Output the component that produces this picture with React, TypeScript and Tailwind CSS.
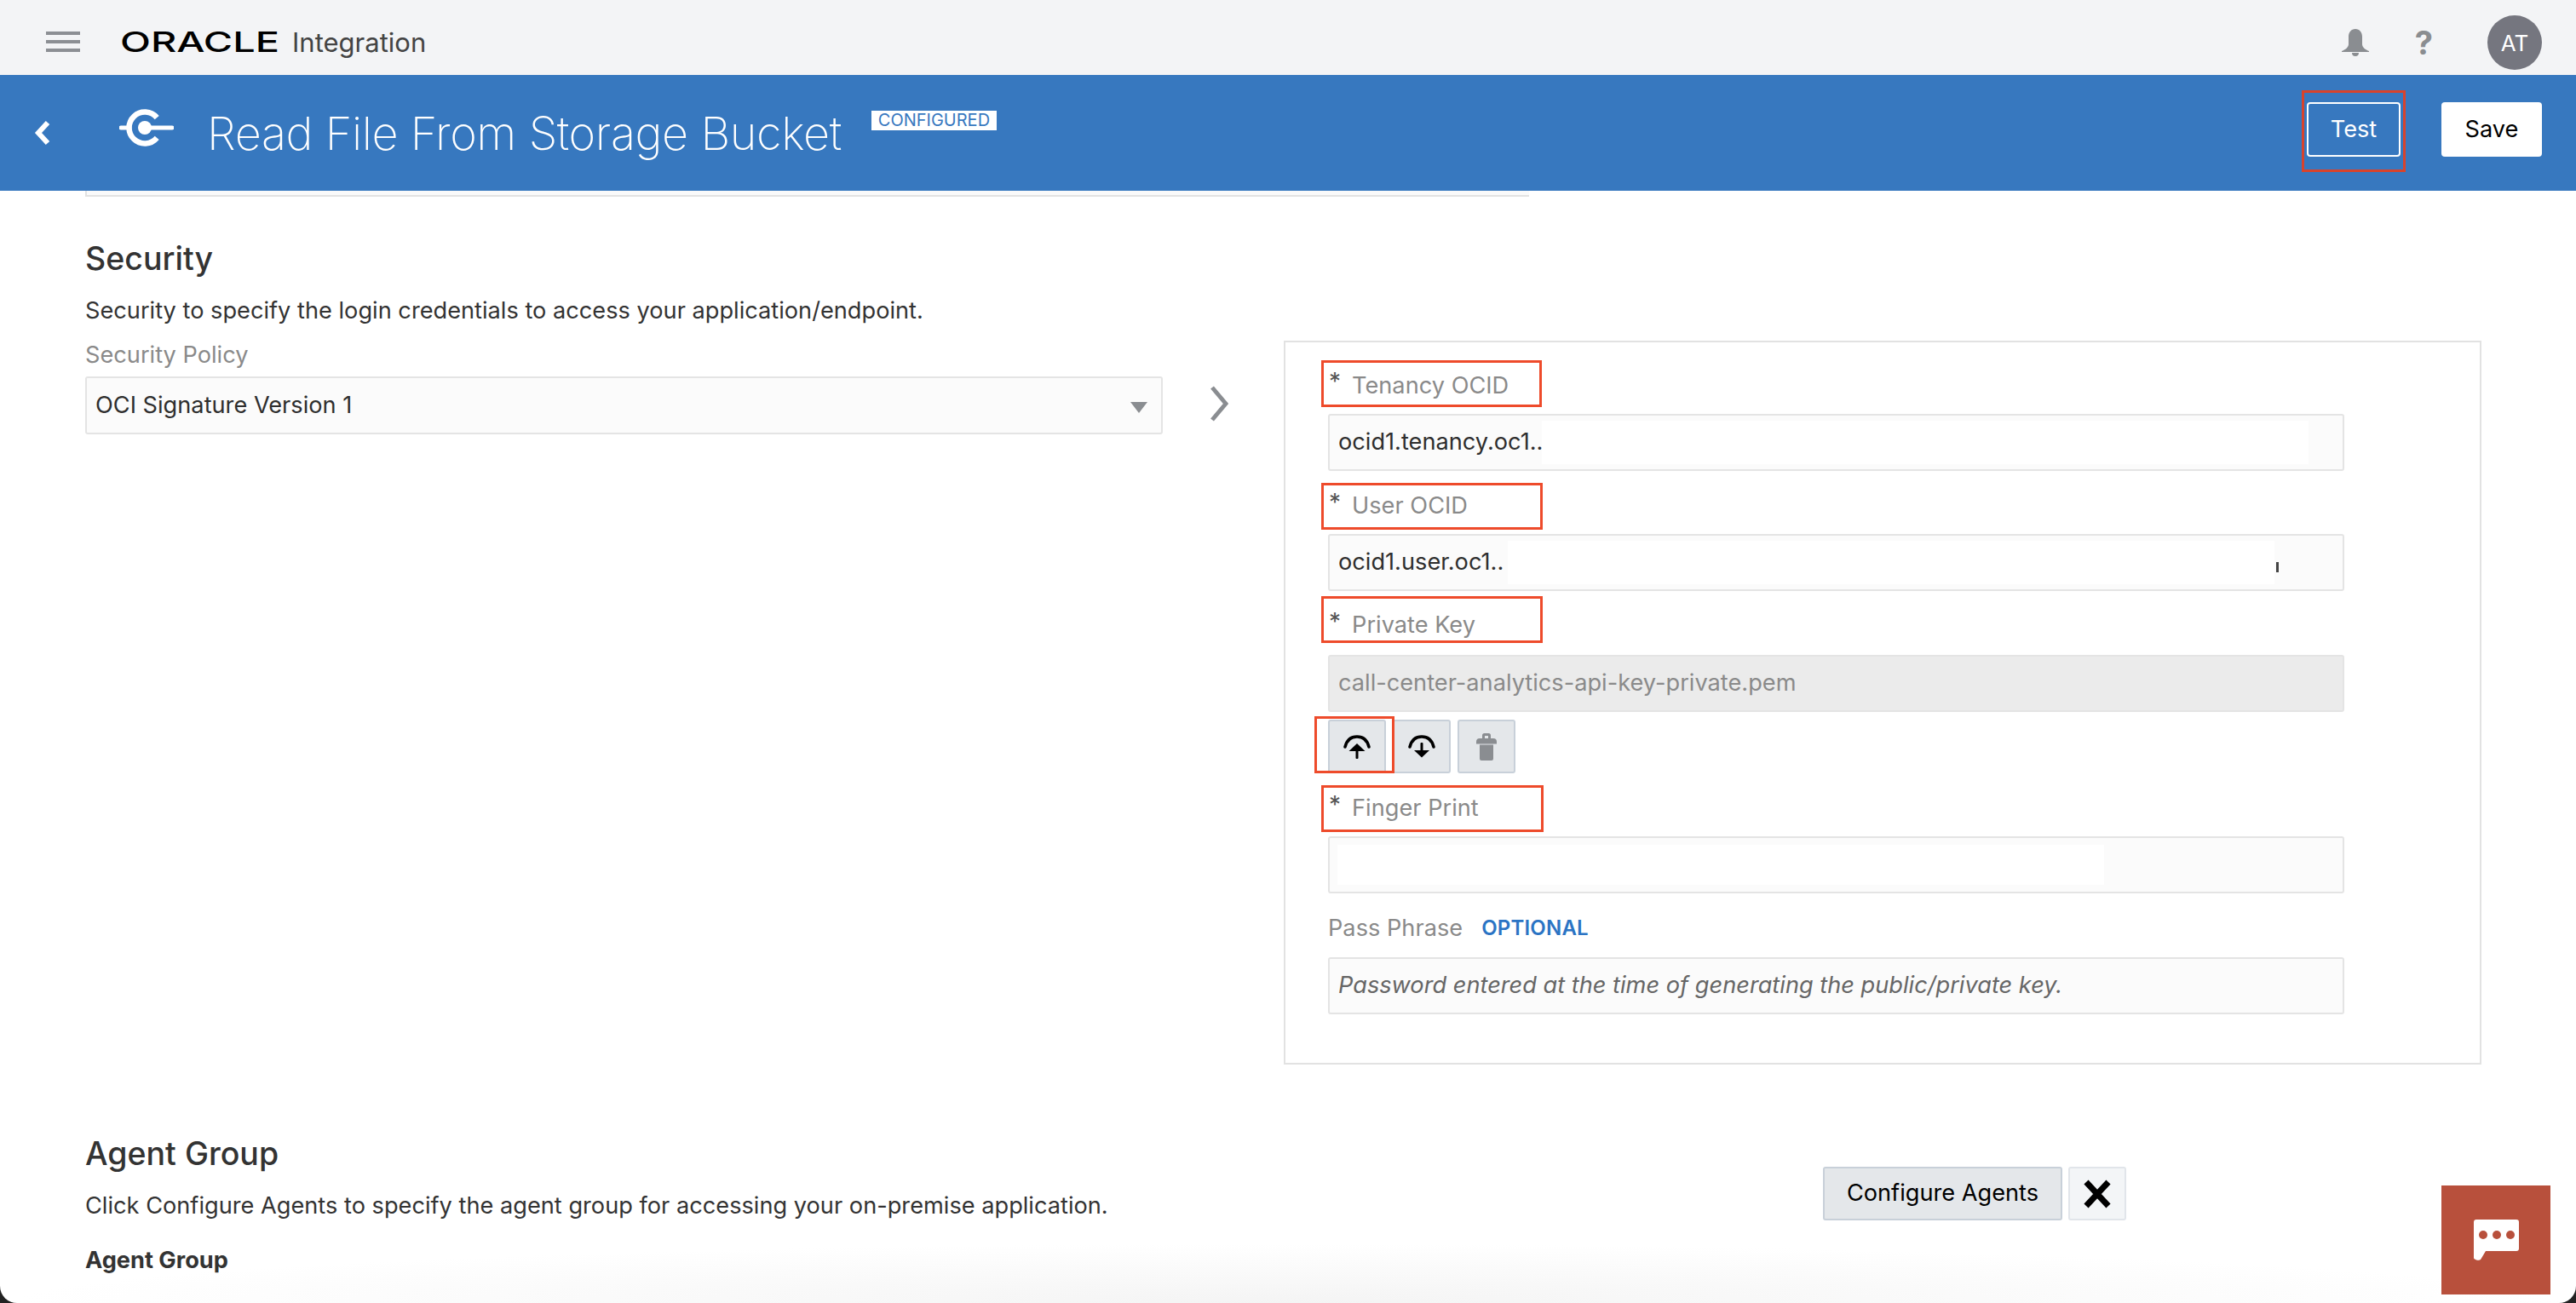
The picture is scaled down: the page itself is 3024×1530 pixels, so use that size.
const font = { fontFamily: "Inter, 'Liberation Sans', sans-serif" };

function FieldLabel({ text, className }: { text: string; className: string }) {
  return (
    <div className={`flex h-[55px] -ml-[8px] items-center border-[3px] border-[#ee4b2b] pl-[6px] ${className}`}>
      <span className="mr-[13px] mb-[10px] text-[28px] leading-none text-[#555]">*</span>
      <span className="text-[27.2px] text-[#8a8a8a]">{text}</span>
    </div>
  );
}

function TextBox({
  value,
  className = "",
  children,
}: {
  value?: string;
  className?: string;
  children?: React.ReactNode;
}) {
  return (
    <div
      className={`relative flex h-[67px] items-center rounded-[3px] border-2 border-[#e4e4e4] bg-[#fbfbfb] pl-[10px] text-[27.2px] text-[#2e2e2e] ${className}`}
    >
      {value}
      {children}
    </div>
  );
}

function UploadIcon() {
  return (
    <svg width="32" height="28" viewBox="0 0 32 28" fill="none">
      <path d="M2 14C4 6 9 2 16 2s12 4 14 12" stroke="#000" strokeWidth="3.5" strokeLinecap="round" />
      <path d="M16 10l9.500 9h-19z" fill="#000" />
      <rect x="14.500" y="17" width="3" height="11" rx="1" fill="#000" />
    </svg>
  );
}

function DownloadIcon() {
  return (
    <svg width="32" height="28" viewBox="0 0 32 28" fill="none">
      <path d="M2 14C4 6 9 2 16 2s12 4 14 12" stroke="#000" strokeWidth="3.5" strokeLinecap="round" />
      <rect x="14.500" y="9" width="3" height="11" rx="1" fill="#000" />
      <path d="M7 18h18l-9 8.500z" fill="#000" />
    </svg>
  );
}

function TrashIcon() {
  return (
    <svg width="24" height="32" viewBox="0 0 24 32" fill="#8a8d91">
      <path d="M7 6V2.500A2.500 2.500 0 019.500 0h5A2.500 2.500 0 0117 2.500V6h3a4 4 0 014 4v2.500H0V10a4 4 0 014-4zm3 0h4V3h-4z" fillRule="evenodd" />
      <path d="M4 13.500h16V30a2 2 0 01-2 2H6a2 2 0 01-2-2z" />
    </svg>
  );
}

function IconButton({ children }: { children: React.ReactNode }) {
  return (
    <div className="flex h-[63px] w-[68px] items-center justify-center rounded-[3px] border-2 border-[#c8d0d9] bg-[#e4e7ea]">
      {children}
    </div>
  );
}

function SecurityPanel() {
  return (
    <div className="mt-[169px] ml-[65px] h-[850px] w-[1406px] border-2 border-[#e2e2e2] pt-[21px] pr-[159px] pl-[50px]">
      <FieldLabel text="Tenancy OCID" className="w-[259px] pt-[5px]" />
      <TextBox value="ocid1.tenancy.oc1.." className="mt-[8px]">
        <div className="absolute top-[6px] bottom-[6px] left-[249px] w-[900px] bg-white" />
      </TextBox>
      <FieldLabel text="User OCID" className="mt-[14px] w-[260px]" />
      <TextBox value="ocid1.user.oc1.." className="mt-[5px]">
        <div className="absolute top-[6px] bottom-[6px] left-[209px] w-[900px] bg-white" />
        <div className="absolute top-[31px] left-[1111px] h-[12px] w-[3px] bg-[#444]" />
      </TextBox>
      <FieldLabel text="Private Key" className="mt-[6px] w-[260px] pt-[14px]" />
      <TextBox value="call-center-analytics-api-key-private.pem" className="mt-[14px] !bg-[#ebebeb] !text-[#8a8a8a]" />
      <div className="mt-[9px] flex gap-[8px]">
        <div className="relative">
          <IconButton>
            <UploadIcon />
          </IconButton>
          <div className="absolute -top-[4px] -left-[16px] h-[67px] w-[94px] border-[3px] border-[#ee4b2b]" />
        </div>
        <IconButton>
          <DownloadIcon />
        </IconButton>
        <IconButton>
          <TrashIcon />
        </IconButton>
      </div>
      <FieldLabel text="Finger Print" className="mt-[14px] w-[261px]" />
      <TextBox className="mt-[5px]">
        <div className="absolute top-[8px] bottom-[8px] left-[9px] w-[900px] bg-white" />
      </TextBox>
      <div className="mt-[21px] flex h-[40px] items-center text-[27.2px] text-[#8a8a8a]">
        Pass Phrase
        <span className="ml-[22px] text-[24px] font-semibold tracking-[0.2px] text-[#2b74c4]">OPTIONAL</span>
      </div>
      <TextBox className="mt-[14px] text-[#666] italic" value="Password entered at the time of generating the public/private key." />
    </div>
  );
}

export default function App() {
  return (
    <div className="h-[1530px] w-[3024px] bg-[#222]">
      <div style={font} className="relative flex h-[1530px] w-[3024px] flex-col overflow-hidden rounded-b-[20px] bg-white">
        <header className="flex h-[88px] shrink-0 items-center bg-[#f3f4f6] pt-[10px] pr-[40px] pl-[54px]">
          <div className="flex h-[24px] w-[40px] flex-col justify-between">
            <div className="h-[4px] bg-[#8c8f94]" />
            <div className="h-[4px] bg-[#8c8f94]" />
            <div className="h-[4px] bg-[#8c8f94]" />
          </div>
          <div className="ml-[47px] flex w-[184px] items-start">
            <span className="inline-block origin-left scale-x-[1.42] text-[33px] leading-none font-medium text-black">
              ORACLE
            </span>
          </div>
          <span className="ml-[18px] text-[31px] leading-none text-[#444]">Integration</span>
          <div className="mt-[2px] ml-auto flex items-center">
            <svg width="32" height="32" viewBox="0 0 32 32" fill="#8a8d91">
              <path d="M16 0c5 0 8 4 8 9v9c0 3 3 6 8 8v1H0v-1c5-2 8-5 8-8V9c0-5 3-9 8-9z" />
              <path d="M12 28h8a4 4 0 01-8 0z" />
            </svg>
            <span className="ml-[54px] text-[38px] leading-none font-bold text-[#8a8d91]">?</span>
            <div className="ml-[64px] flex h-[64px] w-[64px] items-center justify-center rounded-full bg-[#75767f] text-[26px] text-white">
              AT
            </div>
          </div>
        </header>

        <div className="flex h-[136px] shrink-0 items-center bg-[#3778bf] pr-[40px] pl-[40px]">
          <svg width="20" height="30" viewBox="0 0 20 30" fill="none">
            <path d="M16 3L5 15l11 12" stroke="#fff" strokeWidth="6" />
          </svg>
          <svg className="mb-[12px] ml-[80px]" width="64" height="44" viewBox="0 0 64 44" fill="none">
            <path d="M44.200 10.100A18.500 18.500 0 1 0 44.200 33.900" stroke="#fff" strokeWidth="6.5" />
            <circle cx="30" cy="22" r="8" fill="#fff" />
            <path d="M2 22h10M30 22h32" stroke="#fff" strokeWidth="5" strokeLinecap="round" />
          </svg>
          <span className="ml-[39px] text-[54px] font-extralight tracking-[-0.42px] text-white">
            Read File From Storage Bucket
          </span>
          <span className="mb-[30px] ml-[35px] bg-white px-[8px] text-[20px] leading-[23px] text-[#3778bf]">CONFIGURED</span>
          <div className="mb-[4px] ml-auto flex items-center">
            <div className="flex h-[96px] w-[122px] items-center justify-center border-[3px] border-[#d8432c]">
              <div className="mb-[4px] flex h-[64px] w-[110px] items-center justify-center rounded-[4px] border-2 border-white text-[27.2px] text-white">
                Test
              </div>
            </div>
            <div className="mb-[4px] ml-[42px] flex h-[64px] w-[118px] items-center justify-center rounded-[4px] bg-white text-[27.2px] text-black">
              Save
            </div>
          </div>
        </div>

        <main className="flex-1 px-[100px]">
          <div className="h-[7px] w-[1695px] border-b-2 border-l-2 border-[#e2e2e2] bg-[#fafafa]" />
          <section className="flex">
            <div className="w-[1265px]">
              <h2 className="mt-[45px] text-[37.5px] leading-[56px] font-medium text-[#333]">Security</h2>
              <p className="mt-[13px] text-[27.2px] leading-[40px] text-[#333]">
                Security to specify the login credentials to access your application/endpoint.
              </p>
              <div className="mt-[12px] text-[27.2px] leading-[40px] text-[#8a8a8a]">Security Policy</div>
              <div className="relative mt-[5px] flex h-[68px] items-center rounded-[3px] border-2 border-[#e4e4e4] bg-[#fbfbfb] pl-[10px] text-[27.2px] text-[#2e2e2e]">
                OCI Signature Version 1
                <svg className="absolute top-[28px] right-[16px]" width="20" height="13" viewBox="0 0 20 13" fill="#8a8d91">
                  <path d="M0 0h20L10 13z" />
                </svg>
              </div>
            </div>
            <svg className="mt-[222px] ml-[55px]" width="22" height="42" viewBox="0 0 22 42" fill="none">
              <path d="M3 2l16 19L3 40" stroke="#8a8d91" strokeWidth="5" />
            </svg>
            <SecurityPanel />
          </section>
          <section className="mt-[77px] flex">
            <div className="w-[2040px]">
              <h2 className="text-[37.5px] leading-[56px] font-medium text-[#333]">Agent Group</h2>
              <p className="mt-[13px] text-[27.2px] leading-[40px] text-[#333]">
                Click Configure Agents to specify the agent group for accessing your on-premise application.
              </p>
              <div className="mt-[24px] text-[27.2px] leading-[40px] font-bold text-[#333]">Agent Group</div>
            </div>
            <div className="mt-[43px] flex h-[63px] gap-[7px]">
              <div className="flex w-[281px] items-center justify-center rounded-[3px] border-2 border-[#c8d0d9] bg-[#e4e7ea] text-[27.2px] text-black">
                Configure Agents
              </div>
              <div className="flex w-[68px] items-center justify-center rounded-[3px] border-2 border-[#e1e5ea] bg-[#f3f5f7]">
                <svg width="34" height="34" viewBox="0 0 34 34" fill="none">
                  <path d="M4 3l26 28M30 3L4 31" stroke="#000" strokeWidth="7" />
                </svg>
              </div>
            </div>
          </section>
        </main>

        <div className="pointer-events-none absolute inset-x-0 bottom-0 h-[70px] bg-[radial-gradient(ellipse_at_bottom,#f4f4f4,transparent_70%)]" />

        <div className="absolute top-[1392px] left-[2866px] flex h-[128px] w-[128px] items-center justify-center bg-[#b8503c]">
          <svg width="53" height="48" viewBox="0 0 53 48" fill="#fff">
            <path d="M3 0h47a3 3 0 013 3v31a3 3 0 01-3 3H14l-6 10c-1 1-5 1-6 0-1-.5-2-1-2-2V3a3 3 0 013-3z" />
            <circle cx="11" cy="18" r="5" fill="#b8503c" />
            <circle cx="27" cy="18" r="5" fill="#b8503c" />
            <circle cx="43" cy="18" r="5" fill="#b8503c" />
          </svg>
        </div>
      </div>
    </div>
  );
}
